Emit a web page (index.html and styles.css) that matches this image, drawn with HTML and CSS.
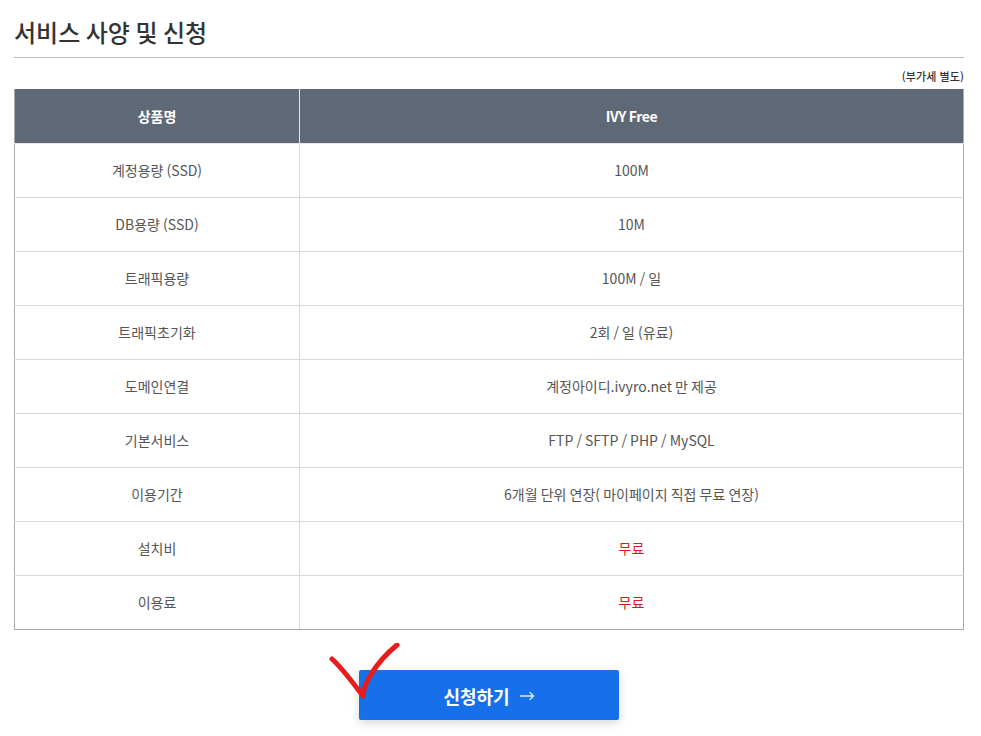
FILE: index.html
```html
<!DOCTYPE html>
<html lang="ko">
<head>
<meta charset="utf-8">
<title>서비스 사양 및 신청</title>
<link rel="stylesheet" href="styles.css">
</head>
<body>
<main class="page">
  <h2 class="title">서비스 사양 및 신청</h2>
  <p class="note">(부가세 별도)</p>
  <table class="spec">
    <thead>
      <tr><th class="c1">상품명</th><th class="c2">IVY Free</th></tr>
    </thead>
    <tbody>
      <tr><td>계정용량 (SSD)</td><td>100M</td></tr>
      <tr><td>DB용량 (SSD)</td><td>10M</td></tr>
      <tr><td>트래픽용량</td><td>100M / 일</td></tr>
      <tr><td>트래픽초기화</td><td>2회 / 일 (유료)</td></tr>
      <tr><td>도메인연결</td><td>계정아이디.ivyro.net 만 제공</td></tr>
      <tr><td>기본서비스</td><td>FTP / SFTP / PHP / MySQL</td></tr>
      <tr><td>이용기간</td><td>6개월 단위 연장( 마이페이지 직접 무료 연장)</td></tr>
      <tr><td>설치비</td><td class="free">무료</td></tr>
      <tr><td>이용료</td><td class="free">무료</td></tr>
    </tbody>
  </table>
  <div class="actions">
    <a class="apply" href="#">
      <span>신청하기</span>
      <svg class="arrow" width="16" height="12" viewBox="0 0 16 12" fill="none" stroke="currentColor" stroke-width="1.3"><path d="M1 6H14.5M10.5 2L14.5 6L10.5 10"/></svg>
      <svg class="check" width="76" height="62" viewBox="0 0 76 62" fill="none" stroke="#e81c1c" stroke-width="5" stroke-linecap="round" stroke-linejoin="round"><path d="M3 16C14 26 24 40 34 53C34 42 46 20 68 2"/></svg>
    </a>
  </div>
</main>
</body>
</html>
```

FILE: styles.css
```css
* { box-sizing: border-box; }
html, body { margin: 0; padding: 0; background: #fff; }
body {
  font-family: "Noto Sans CJK KR", "Noto Sans", sans-serif;
  color: #555;
  height: 736px;
  overflow: hidden;
}
.page { padding: 0 17px 0 14px; }
.title {
  margin: 0;
  height: 58px;
  padding-top: 14px;
  font-size: 24px;
  line-height: 36px;
  font-weight: 500;
  color: #333;
  word-spacing: -1.2px;
  border-bottom: 1px solid #bbb;
}
.note {
  margin: 0;
  height: 31px;
  padding-top: 10px;
  text-align: right;
  font-size: 11px;
  line-height: 16px;
  font-weight: 500;
  letter-spacing: 0.1px;
  color: #333;
}
.spec {
  width: 100%;
  border-collapse: collapse;
  table-layout: fixed;
  font-size: 14px;
  word-spacing: -0.8px;
  border-right: 1px solid #aaa;
  border-left: 1px solid #aaa;
  border-bottom: 1px solid #aaa;
}
.spec .c1 { width: 285px; }
.spec .c2 { letter-spacing: -0.4px; }
.spec th {
  height: 54px;
  padding: 0;
  background: #5f6876;
  color: #fff;
  font-weight: 700;
  border-left: 1px solid #e6e6e6;
  border-bottom: 1px solid #e6e6e6;
}
.spec th:first-child { border-left: 0; }
.spec td {
  height: 54px;
  padding: 0;
  text-align: center;
  font-weight: 400;
  border-bottom: 1px solid #d8d8d8;
  border-left: 1px solid #d8d8d8;
}
.spec td:first-child { border-left: 0; }
.spec tr:last-child td { border-bottom-color: #aaa; }
.spec .free { color: #d91c1c; }
.actions {
  display: flex;
  justify-content: center;
  padding-top: 40px;
}
.apply {
  position: relative;
  display: flex;
  align-items: center;
  justify-content: center;
  gap: 9px;
  width: 260px;
  height: 50px;
  padding-top: 2px;
  border-radius: 2px;
  background: #1570ea;
  color: #fff;
  font-size: 18px;
  font-weight: 700;
  text-decoration: none;
  box-shadow: 0 3px 10px rgba(0, 0, 0, 0.16);
}
.arrow { color: #dfe9fb; }
.check {
  position: absolute;
  left: -30px;
  top: -27px;
}
```
